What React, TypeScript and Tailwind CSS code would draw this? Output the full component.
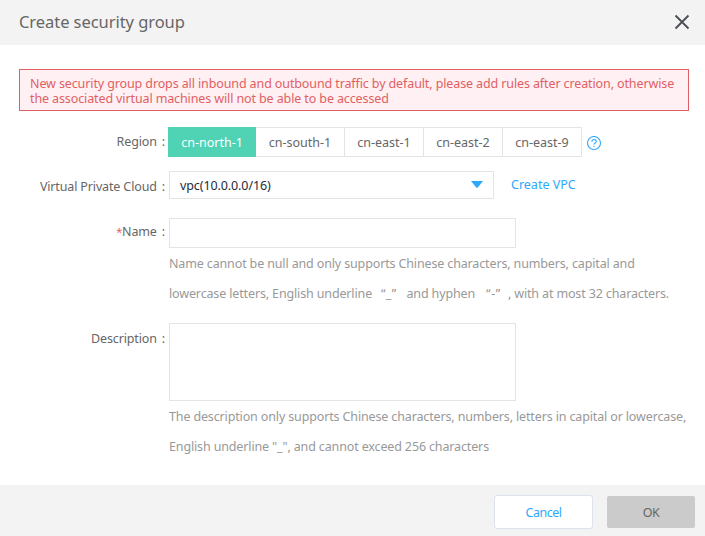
import type { ReactNode } from "react";

const regions = ["cn-south-1", "cn-east-1", "cn-east-2", "cn-east-9"];
const regionWidths = ["w-[89px]", "w-[79px]", "w-[79px]", "w-[79px]"];

function Label({ children, className = "" }: { children: ReactNode; className?: string }) {
  return (
    <div className={`flex w-[165px] shrink-0 justify-end leading-5 tracking-[-0.14px] text-[#666] ${className}`}>
      <span>{children}</span>
      <span className="ml-[5px]">:</span>
    </div>
  );
}

export default function App() {
  return (
    <div className="flex h-[536px] w-[705px] flex-col whitespace-nowrap bg-white font-['Noto_Sans','Open_Sans',sans-serif] text-[12.5px] text-[#666]">
      <header className="flex h-[45px] shrink-0 items-center justify-between bg-[#f3f3f3] pr-[15px] pl-[19px]">
        <h1 className="-mt-[2px] text-[16.5px] leading-5 tracking-[-0.06px]">Create security group</h1>
        <button aria-label="Close" className="-mt-[2px]">
          <svg width="16" height="16" viewBox="0 0 16 16" fill="none" stroke="#4b4f56" strokeWidth="1.9">
            <path d="M1.5 1.5 14.5 14.5M14.5 1.5 1.5 14.5" />
          </svg>
        </button>
      </header>

      <main className="h-[440px] shrink-0 pt-6">
        <div className="ml-[19px] h-[42px] w-[670px] border border-[#e15f63] bg-[#fff0f3] pt-[6px] pl-[10px] leading-[15px] tracking-[-0.115px] text-[#e15f63]">
          <p>New security group drops all inbound and outbound traffic by default, please add rules after creation, otherwise</p>
          <p>the associated virtual machines will not be able to be accessed</p>
        </div>

        <div className="mt-4 flex h-[30px]">
          <Label className="pt-[5px]">Region</Label>
          <div className="ml-[3px] flex">
            <div className="flex w-[88px] items-center justify-center bg-[#50d2b5] pt-[2px] text-white">cn-north-1</div>
            {regions.map((r, i) => (
              <div key={r} className={`flex items-center justify-center border-y border-r border-[#e4e4e4] pt-[2px] ${regionWidths[i]}`}>{r}</div>
            ))}
          </div>
          <svg className="mt-[9px] ml-[4px]" width="16" height="16" viewBox="0 0 16 16" fill="none" stroke="#2ea8fc" strokeWidth="1.1">
            <circle cx="8" cy="7" r="6.5" />
            <path d="M5.9 5.7C5.9 2.8 10.2 3 10.2 5.4C10.2 7 8 7 8 8.6M8 9.7V10.9" />
          </svg>
        </div>

        <div className="mt-[14px] flex h-7">
          <Label className="pt-[6px]">Virtual Private Cloud</Label>
          <div className="ml-1 flex w-[325px] items-center justify-between border border-[#e4e4e4] pr-[10px] pl-[10px] pt-[2px] tracking-[-0.1px] text-[#252b3a]">
            <span>vpc(10.0.0.0/16)</span>
            <svg className="-mt-[4px]" width="12" height="7" viewBox="0 0 12 7" fill="#2ea8fc"><path d="M0 0H12L7 6.2Q6 7.4 5 6.2Z" /></svg>
          </div>
          <a className="ml-[17px] pt-1 leading-5 text-[#2ea8fc]">Create VPC</a>
        </div>

        <div className="mt-[19px] flex h-[105px]">
          <Label className="pt-1"><span className="text-[11px] text-[#e15f63]">*</span>Name</Label>
          <div className="ml-1">
            <div className="h-[30px] w-[347px] border border-[#e4e4e4]" />
            <div className="pt-px leading-[30px] tracking-[-0.14px] text-[#999]">
              <p>Name cannot be null and only supports Chinese characters, numbers, capital and</p>
              <p>lowercase letters, English underline<span className="ml-[9px] tracking-[0.3px]">“_”</span><span className="ml-[10px]">and hyphen</span><span className="ml-[11px] tracking-[0.6px]">“-”</span><span className="ml-[7px]">, with at most 32 characters.</span></p>
            </div>
          </div>
        </div>

        <div className="flex">
          <Label className="pt-[6px]">Description</Label>
          <div className="ml-1">
            <div className="h-[78px] w-[347px] border border-[#e4e4e4]" />
            <div className="pt-px leading-[30px] tracking-[-0.14px] text-[#999]">
              <p>The description only supports Chinese characters, numbers, letters in capital or lowercase,</p>
              <p>English underline "_", and cannot exceed 256 characters</p>
            </div>
          </div>
        </div>
      </main>

      <footer className="flex h-[51px] shrink-0 items-start justify-end bg-[#f3f3f3] pt-[10px] pr-[10px]">
        <button className="h-[34px] w-[99px] rounded-[3px] border border-[#dce3ec] bg-white pt-[2px] tracking-[-0.5px] text-[#2ea8fc]">Cancel</button>
        <button className="mt-px ml-[14px] h-8 w-[88px] rounded-[2px] bg-[#cbcbcb] pt-[2px] tracking-[-0.5px]">OK</button>
      </footer>
    </div>
  );
}
